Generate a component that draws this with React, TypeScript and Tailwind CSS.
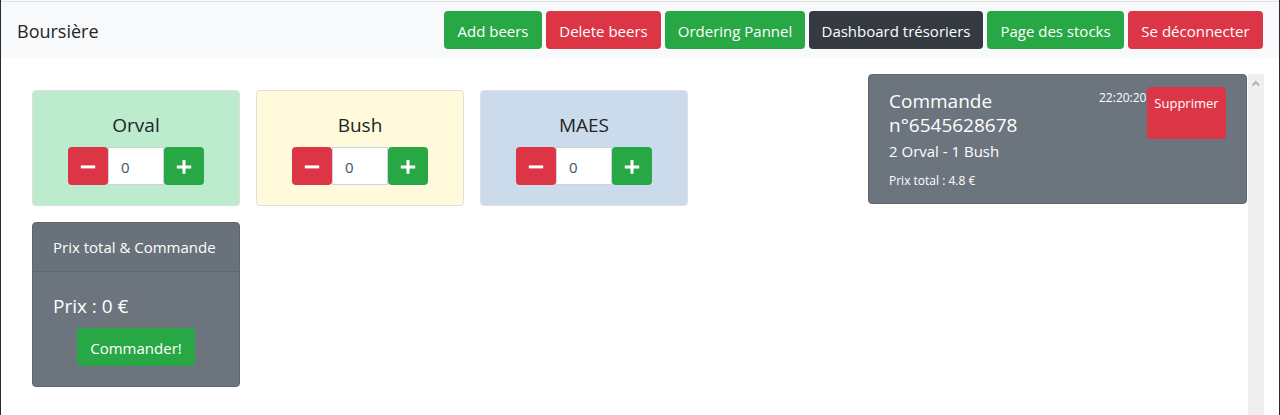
import { useState } from "react";

const navLinks = [
  { label: "Add beers", style: "w-[98px] bg-[#28a745]" },
  { label: "Delete beers", style: "w-[115px] bg-[#dc3545]" },
  { label: "Ordering Pannel", style: "w-[140px] bg-[#28a745]" },
  { label: "Dashboard trésoriers", style: "w-[174px] bg-[#343a40]" },
  { label: "Page des stocks", style: "w-[137px] bg-[#28a745]" },
  { label: "Se déconnecter", style: "w-[135px] bg-[#dc3545]" },
];

const beers = [
  { name: "Orval", style: "bg-[#bdebcd]" },
  { name: "Bush", style: "bg-[#fffadc]" },
  { name: "MAES", style: "bg-[#ccdbeb]" },
];

function BeerCard({ name, style }: { name: string; style: string }) {
  const [count, setCount] = useState(0);
  return (
    <section className={`w-52 rounded-sm border border-[#dfdfdf] p-5 ${style}`}>
      <h2 className="mb-3 pt-1 text-center text-[19px] leading-5">
        <label htmlFor={`count-${name}`}>{name}</label>
      </h2>
      <div className="flex justify-center">
        <button
          type="button"
          aria-label={`Retirer ${name}`}
          onClick={() => setCount(Math.max(0, count - 1))}
          className="flex h-[38px] w-10 items-center justify-center rounded-sm bg-[#dc3545] text-white"
        >
          <svg width="16" height="16" viewBox="0 0 16 16" aria-hidden="true">
            <path d="M.8 7.400h14.400v3H.8z" fill="currentColor" />
          </svg>
        </button>
        <input
          id={`count-${name}`}
          value={count}
          onChange={(e) => setCount(Number(e.target.value) || 0)}
          className="h-[38px] w-14 border border-[#ced4da] bg-white px-3 pt-0.5 text-[15px] text-[#495057] outline-none"
        />
        <button
          type="button"
          aria-label={`Ajouter ${name}`}
          onClick={() => setCount(count + 1)}
          className="flex h-[38px] w-10 items-center justify-center rounded-sm bg-[#28a745] text-white"
        >
          <svg width="16" height="16" viewBox="0 0 16 16" aria-hidden="true">
            <path d="M.8 7.400h5.700V2h3v5.400h5.700v3H9.500v5.400h-3v-5.400H.8z" fill="currentColor" />
          </svg>
        </button>
      </div>
    </section>
  );
}

export default function App() {
  return (
    <div className="flex min-h-screen flex-col border-x border-[#2b2b2f] bg-white font-['Open_Sans','Noto_Sans',sans-serif] text-[15px] leading-6 text-[#212529]">
      <div className="h-0.5 border-b border-[#dee0e2] bg-[#f8f9fa]" />
      <nav className="flex h-14 items-center justify-between bg-[#f8f9fa] px-4">
        <a href="#accueil" className="pt-0.5 text-lg">
          Boursière
        </a>
        <div className="flex gap-1">
          {navLinks.map((link) => (
            <a
              key={link.label}
              href="#page"
              className={`flex h-[38px] items-center justify-center whitespace-nowrap rounded-sm pt-0.5 text-white ${link.style}`}
            >
              {link.label}
            </a>
          ))}
        </div>
      </nav>
      <main className="flex flex-1 items-stretch justify-between pl-[31px] pr-[15px] pt-4">
        <div className="flex flex-col gap-4 pt-4">
          <div className="flex gap-4">
            {beers.map((beer) => (
              <BeerCard key={beer.name} {...beer} />
            ))}
          </div>
          <section className="w-52 rounded-sm border border-[#5e6770] bg-[#6c757d] text-white">
            <h2 className="whitespace-nowrap border-b border-[#5e6770] bg-[#69727a] px-5 py-3">
              Prix total &amp; Commande
            </h2>
            <div className="p-5">
              <p className="mb-3 pt-1 text-[19px] leading-5">Prix : 0 €</p>
              <button
                type="button"
                className="mx-auto flex h-[38px] w-[118px] items-center justify-center rounded-sm bg-[#28a745] pt-0.5"
              >
                Commander!
              </button>
            </div>
          </section>
        </div>
        <div className="flex gap-px">
          <article className="w-[379px] self-start rounded-sm border border-[#5e6770] bg-[#6c757d] px-5 py-3 text-white">
            <div className="flex">
              <h2 className="w-[210px] py-0.5 text-[19px] leading-6">
                Commande
                <br />
                n°6545628678
              </h2>
              <time className="w-12 whitespace-nowrap pt-px text-xs leading-5">22:20:20</time>
              <button
                type="button"
                className="flex w-[79px] items-start justify-center rounded-sm bg-[#dc3545] pt-1 text-[13px] leading-6"
              >
                Supprimer
              </button>
            </div>
            <p className="mb-1">2 Orval - 1 Bush</p>
            <p className="pt-1 text-xs leading-5">Prix total : 4.8 €</p>
          </article>
          <div className="w-4 bg-[#efefef] pt-1">
            <svg width="16" height="10" viewBox="0 0 16 10" aria-hidden="true">
              <path d="M4.500 7.500 7.800 4l3.300 3.500" fill="none" stroke="#b5b5b5" strokeWidth="2" />
            </svg>
          </div>
        </div>
      </main>
    </div>
  );
}
